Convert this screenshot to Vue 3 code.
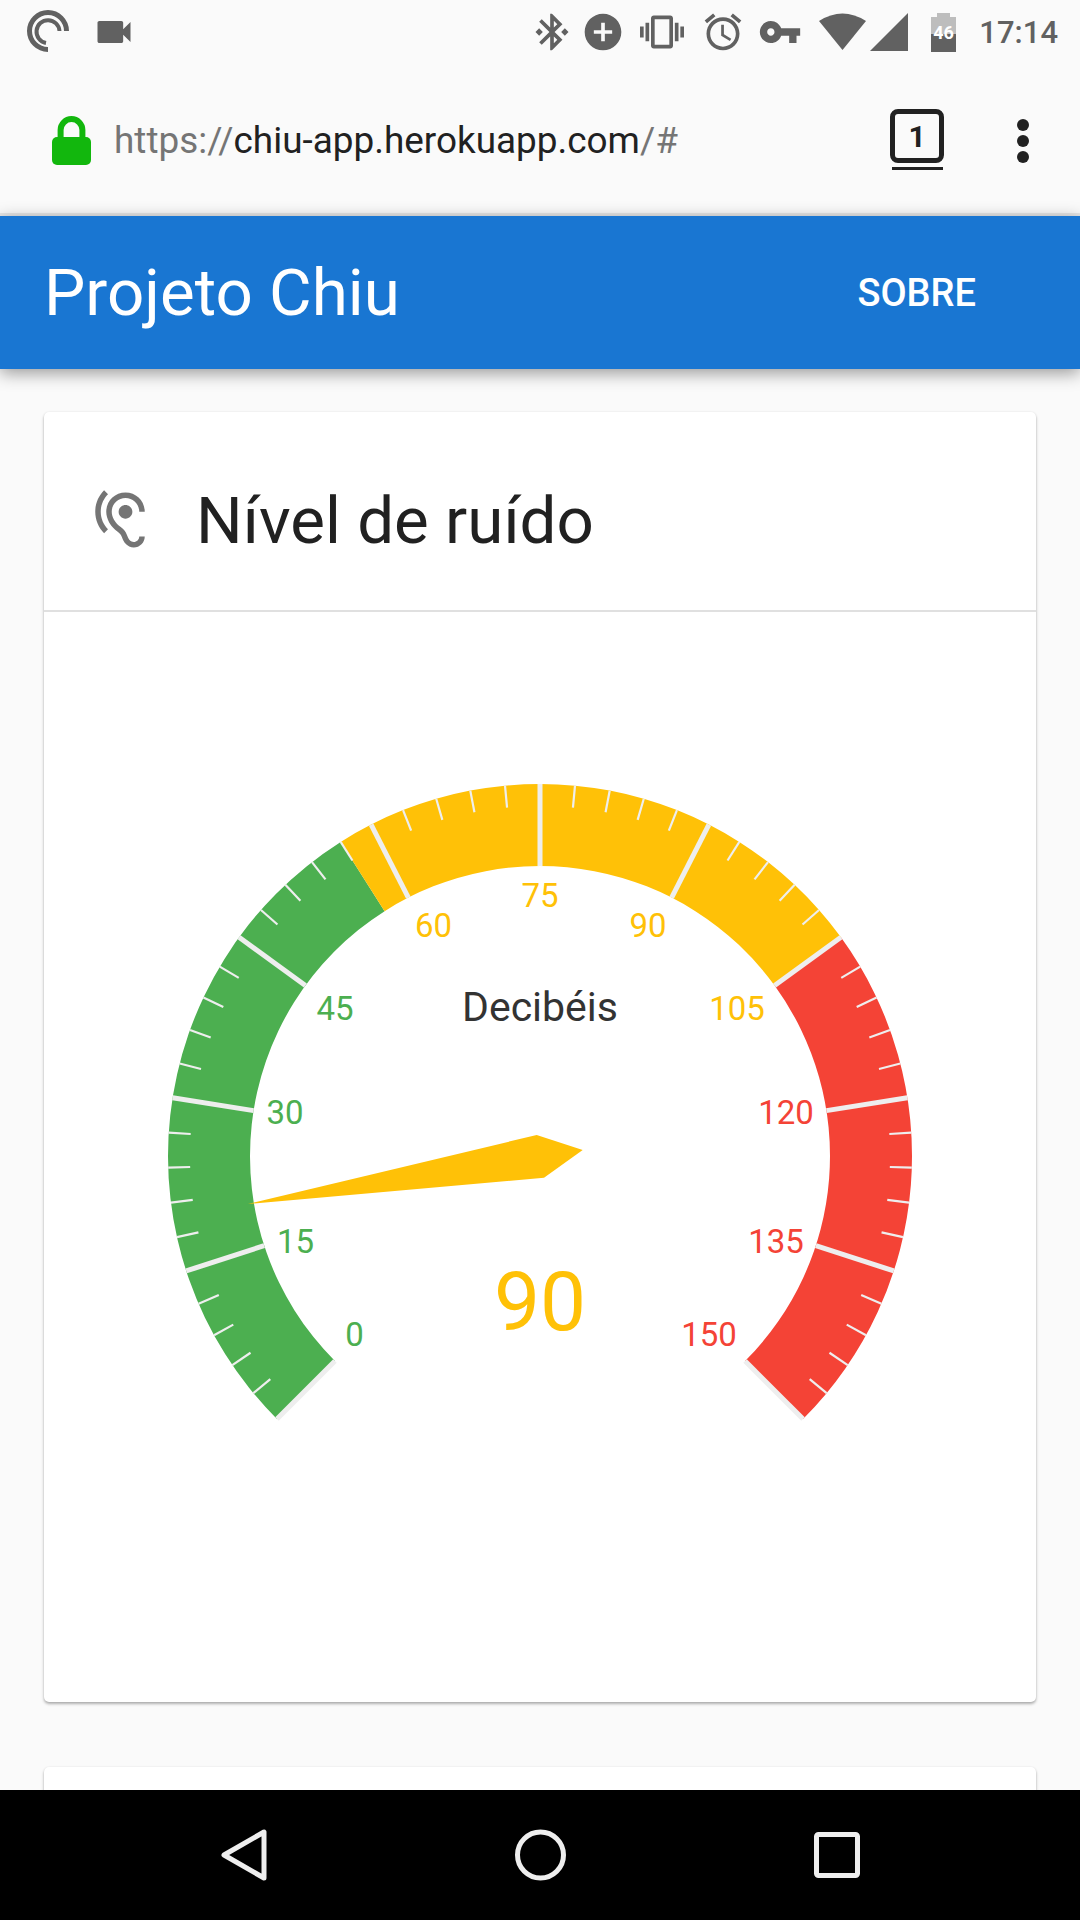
<script setup>
import { computed } from 'vue'

const cx = 540
const cy = 1156
const rOuter = 372
const rInner = 290

const polar = (value, r) => {
  const a = ((value * 1.8 - 135 - 90) * Math.PI) / 180
  return [cx + r * Math.cos(a), cy + r * Math.sin(a)]
}
const fmt = (n) => n.toFixed(2)

const zones = computed(() =>
  [
    [0, 57, '#4caf50'],
    [57, 105, '#ffc107'],
    [105, 150, '#f44336'],
  ].map(([from, to, color]) => {
    const [ax, ay] = polar(from, rOuter)
    const [bx, by] = polar(to, rOuter)
    const [c, d] = polar(to, rInner)
    const [e, f] = polar(from, rInner)
    const large = (to - from) * 1.8 > 180 ? 1 : 0
    return {
      color,
      d: `M${fmt(ax)} ${fmt(ay)}A${rOuter} ${rOuter} 0 ${large} 1 ${fmt(bx)} ${fmt(by)}L${fmt(c)} ${fmt(d)}A${rInner} ${rInner} 0 ${large} 0 ${fmt(e)} ${fmt(f)}Z`,
    }
  })
)

const ticks = computed(() => {
  const list = []
  for (let v = 0; v <= 150; v += 3) {
    const major = v % 15 === 0
    const [x1, y1] = polar(v, rOuter)
    const [x2, y2] = polar(v, major ? rInner : rOuter - 22)
    list.push({ v, major, x1, y1, x2, y2 })
  }
  return list
})

const labels = [
  { v: 0, x: 354.5, y: 1334, color: '#4caf50' },
  { v: 15, x: 295.5, y: 1241, color: '#4caf50' },
  { v: 30, x: 285, y: 1112, color: '#4caf50' },
  { v: 45, x: 335, y: 1008.5, color: '#4caf50' },
  { v: 60, x: 433.5, y: 925, color: '#ffc107' },
  { v: 75, x: 540, y: 895, color: '#ffc107' },
  { v: 90, x: 648, y: 925, color: '#ffc107' },
  { v: 105, x: 737, y: 1008.5, color: '#ffc107' },
  { v: 120, x: 786, y: 1112, color: '#f44336' },
  { v: 135, x: 776, y: 1241, color: '#f44336' },
  { v: 150, x: 709, y: 1334, color: '#f44336' },
]
</script>

<template>
  <div class="page">
    <div class="status">
      <div class="status-left">
        <svg class="sync" width="44" height="44" viewBox="0 0 44 44">
          <path d="M22 39.5A18.5 18.5 0 1 1 40.5 21" fill="none" stroke="#616161" stroke-width="5" />
          <path d="M20 33A11.5 11.5 0 1 1 33.500 21" fill="none" stroke="#616161" stroke-width="4" />
        </svg>
        <svg class="icon video" viewBox="0 0 24 24"><path d="M17 10.500V7c0-.55-.45-1-1-1H4c-.55 0-1 .45-1 1v10c0 .55.45 1 1 1h12c.55 0 1-.45 1-1v-3.500l4 4v-11l-4 4z" /></svg>
      </div>
      <div class="status-right">
        <svg class="icon" viewBox="0 0 24 24"><path d="M7 12l-2-2-2 2 2 2 2-2zm10.710-4.290L12 2h-1v7.590L6.410 5 5 6.410 10.590 12 5 17.590 6.410 19 11 14.410V22h1l5.710-5.710-4.300-4.290 4.300-4.290zM13 5.830l1.880 1.880L13 9.590V5.830zm1.880 10.460L13 18.170v-3.760l1.880 1.880zM19 10l-2 2 2 2 2-2-2-2z" /></svg>
        <svg class="icon plus" viewBox="0 0 24 24"><path d="M12 2C6.480 2 2 6.480 2 12s4.480 10 10 10 10-4.480 10-10S17.520 2 12 2zm5 11h-4v4h-2v-4H7v-2h4V7h2v4h4v2z" /></svg>
        <svg class="icon vibrate" viewBox="0 0 24 24"><path d="M0 15h2V9H0v6zm3 2h2V7H3v10zm19-8v6h2V9h-2zm-3 8h2V7h-2v10zM16.500 3h-9C6.670 3 6 3.670 6 4.500v15c0 .83.67 1.500 1.500 1.500h9c.83 0 1.500-.67 1.500-1.500v-15c0-.83-.67-1.500-1.500-1.500zM16 19H8V5h8v14z" /></svg>
        <svg class="icon alarm" viewBox="0 0 24 24"><path d="M22 5.720l-4.600-3.860-1.290 1.530 4.600 3.860L22 5.720zM7.880 3.390L6.600 1.860 2 5.710l1.290 1.530 4.590-3.850zM12.500 8H11v6l4.750 2.850.75-1.230-4-2.370V8zM12 4c-4.970 0-9 4.030-9 9s4.030 9 9 9 9-4.030 9-9-4.030-9-9-9zm0 16c-3.870 0-7-3.130-7-7s3.130-7 7-7 7 3.130 7 7-3.130 7-7 7z" /></svg>
        <svg class="icon key" viewBox="0 0 24 24"><path d="M12.650 10C11.830 7.670 9.610 6 7 6c-3.310 0-6 2.690-6 6s2.690 6 6 6c2.610 0 4.830-1.670 5.650-4H17v4h4v-4h2v-4H12.650zM7 14c-1.100 0-2-.9-2-2s.9-2 2-2 2 .9 2 2-.9 2-2 2z" /></svg>
        <svg class="wifi" width="47" height="38" viewBox="0 0 47 38"><path d="M0 8Q23.500 -7 47 8L23.500 37Z" /></svg>
        <svg class="signal" width="38" height="38" viewBox="0 0 38 38"><path d="M0 38L38 0V38Z" /></svg>
        <svg class="battery" width="25" height="39" viewBox="0 0 25 39">
          <path d="M6 0H19V4H25V21H0V4H6Z" fill="#bdbdbd" />
          <rect x="0" y="21" width="25" height="18" fill="#616161" />
          <text x="12.500" y="21" class="battery-text" text-anchor="middle">46</text>
        </svg>
        <span class="time">17:14</span>
      </div>
    </div>

    <div class="browser">
      <svg class="lock" width="39" height="49" viewBox="0 0 39 49">
        <path d="M8.600 24V14a10.900 10.900 0 0 1 21.800 0V24" fill="none" stroke="#12b70d" stroke-width="6" />
        <rect x="0" y="21" width="39" height="28" rx="5" fill="#12b70d" />
      </svg>
      <div class="url"><span class="dim">https://</span>chiu-app.herokuapp.com<span class="dim">/#</span></div>
      <div class="tabs">
        <div class="tab-box">1</div>
        <div class="tab-line"></div>
      </div>
      <div class="menu"><i></i><i></i><i></i></div>
    </div>

    <header class="appbar">
      <div class="app-title">Projeto Chiu</div>
      <div class="app-link">SOBRE</div>
    </header>

    <main class="content">
      <section class="card">
        <div class="card-head">
          <svg class="ear" viewBox="0 0 24 24"><path d="M17 20c-.29 0-.56-.06-.76-.15-.71-.37-1.210-.88-1.710-2.380-.51-1.560-1.470-2.290-2.390-3-.79-.61-1.610-1.240-2.320-2.530C9.290 10.980 9 9.930 9 9c0-2.800 2.200-5 5-5s5 2.200 5 5h2c0-3.930-3.070-7-7-7S7 5.070 7 9c0 1.260.38 2.650 1.070 3.900.91 1.650 1.980 2.480 2.850 3.150.81.62 1.390 1.070 1.710 2.050.6 1.820 1.370 2.840 2.730 3.550.51.23 1.070.35 1.640.35 2.210 0 4-1.790 4-4h-2c0 1.100-.9 2-2 2zM7.640 2.640L6.220 1.220C4.230 3.210 3 5.960 3 9s1.230 5.790 3.220 7.780l1.410-1.410C6.010 13.740 5 11.490 5 9s1.010-4.740 2.640-6.360zM11.500 9c0 1.380 1.120 2.500 2.500 2.500s2.500-1.120 2.500-2.500-1.120-2.500-2.500-2.500-2.500 1.120-2.500 2.500z" /></svg>
          <h2 class="card-title">Nível de ruído</h2>
        </div>
        <svg class="gauge" width="992" height="1090" viewBox="44 612 992 1090">
          <path v-for="z in zones" :key="z.color" :d="z.d" :fill="z.color" />
          <line
            v-for="t in ticks"
            :key="t.v"
            :x1="t.x1"
            :y1="t.y1"
            :x2="t.x2"
            :y2="t.y2"
            stroke="#eeeeee"
            :stroke-width="t.major ? 5 : 2.200"
          />
          <text
            v-for="l in labels"
            :key="'l' + l.v"
            :x="l.x"
            :y="l.y + 11.700"
            class="gauge-label"
            :fill="l.color"
            text-anchor="middle"
          >{{ l.v }}</text>
          <text x="540" y="1021" class="gauge-unit" text-anchor="middle">Decibéis</text>
          <text x="540" y="1330" class="gauge-value" text-anchor="middle">90</text>
          <polygon points="248,1204 536.700,1135 582.700,1150 544,1177.700" fill="#ffc107" />
        </svg>
      </section>
      <section class="card card-next"></section>
    </main>

    <nav class="nav">
      <svg width="60" height="56" viewBox="0 0 60 56">
        <path d="M51 5V51L11 28Z" fill="none" stroke="#eeeeee" stroke-width="5" stroke-linejoin="round" />
      </svg>
      <svg width="60" height="56" viewBox="0 0 60 56">
        <circle cx="30.500" cy="28" r="23" fill="none" stroke="#eeeeee" stroke-width="5" />
      </svg>
      <svg width="60" height="56" viewBox="0 0 60 56">
        <rect x="9.500" y="7.500" width="41" height="41" rx="2" fill="none" stroke="#eeeeee" stroke-width="5" />
      </svg>
    </nav>
  </div>
</template>

<style>
html,
body {
  margin: 0;
  background: #fafafa;
}
</style>

<style scoped>
.page {
  width: 1080px;
  height: 1920px;
  display: flex;
  flex-direction: column;
  overflow: hidden;
  background: #fafafa;
  font-family: Roboto, sans-serif;
}
.status {
  flex: none;
  height: 64px;
  display: flex;
  align-items: center;
  justify-content: space-between;
  padding: 0 22px 0 26px;
  box-sizing: border-box;
}
.status-left,
.status-right {
  display: flex;
  align-items: center;
}
.icon {
  width: 44px;
  height: 44px;
  fill: #616161;
  flex: none;
}
.video {
  margin-left: 22px;
}
.plus {
  margin-left: 7px;
}
.vibrate {
  margin-left: 15px;
}
.alarm {
  margin-left: 17px;
}
.key {
  margin-left: 13px;
}
.wifi {
  margin-left: 17px;
  fill: #616161;
}
.signal {
  margin-left: 4px;
  fill: #616161;
}
.battery {
  margin-left: 23px;
}
.battery-text {
  font-family: Roboto, sans-serif;
  font-size: 18px;
  font-weight: 700;
  fill: #fff;
  dominant-baseline: middle;
}
.time {
  margin-left: 23px;
  font-size: 31px;
  font-weight: 500;
  color: #616161;
}
.browser {
  flex: none;
  height: 152px;
  box-sizing: border-box;
  border-bottom: 3px solid #e8e8e8;
  display: flex;
  align-items: center;
  padding: 4px 0 0 52px;
}
.lock {
  flex: none;
}
.url {
  margin-left: 23px;
  font-size: 36.900px;
  color: #212121;
  flex: 1;
  white-space: nowrap;
}
.dim {
  color: #757575;
}
.tabs {
  flex: none;
  width: 54px;
  display: flex;
  flex-direction: column;
  align-items: center;
  gap: 4px;
  margin-top: -2px;
}
.tab-box {
  width: 54px;
  height: 54px;
  box-sizing: border-box;
  border: 5.500px solid #212121;
  border-radius: 8px;
  display: flex;
  align-items: center;
  justify-content: center;
  font-size: 30px;
  font-weight: 700;
  color: #212121;
}
.tab-line {
  width: 51px;
  height: 3px;
  background: #212121;
}
.menu {
  flex: none;
  margin: 0 51px 0 73px;
  display: flex;
  flex-direction: column;
  gap: 4px;
}
.menu i {
  display: block;
  width: 12px;
  height: 12px;
  border-radius: 50%;
  background: #212121;
}
.appbar {
  flex: none;
  height: 153px;
  background: #1976d2;
  color: #fff;
  display: flex;
  align-items: center;
  justify-content: space-between;
  padding: 0 104px 0 44px;
  box-shadow: 0 4px 16px rgba(0, 0, 0, 0.4);
  position: relative;
}
.app-title {
  font-size: 65.500px;
}
.app-link {
  font-size: 38px;
  font-weight: 500;
}
.content {
  flex: 1;
  min-height: 0;
  overflow: hidden;
  padding: 43px 44px 0;
  display: flex;
  flex-direction: column;
  gap: 65px;
}
.card {
  flex: none;
  background: #fff;
  border-radius: 5px;
  box-shadow: 0 2px 3px rgba(0, 0, 0, 0.3), 0 0 2px rgba(0, 0, 0, 0.08);
}
.card-next {
  height: 300px;
}
.card-head {
  height: 200px;
  box-sizing: border-box;
  border-bottom: 2px solid #e0e0e0;
  display: flex;
  align-items: center;
  padding: 18px 0 0 43px;
}
.ear {
  width: 66px;
  height: 66px;
  fill: #757575;
  flex: none;
}
.card-title {
  margin: 0 0 0 43px;
  font-size: 65.500px;
  font-weight: 400;
  color: #212121;
}
.gauge {
  display: block;
}
.gauge-label {
  font-family: Roboto, sans-serif;
  font-size: 33px;
}
.gauge-unit {
  font-family: Roboto, sans-serif;
  font-size: 41px;
  fill: #333;
}
.gauge-value {
  font-family: Roboto, sans-serif;
  font-size: 82px;
  fill: #ffc107;
}
.nav {
  flex: none;
  height: 130px;
  background: #000;
  display: flex;
  align-items: center;
  justify-content: center;
  gap: 237px;
}
</style>
